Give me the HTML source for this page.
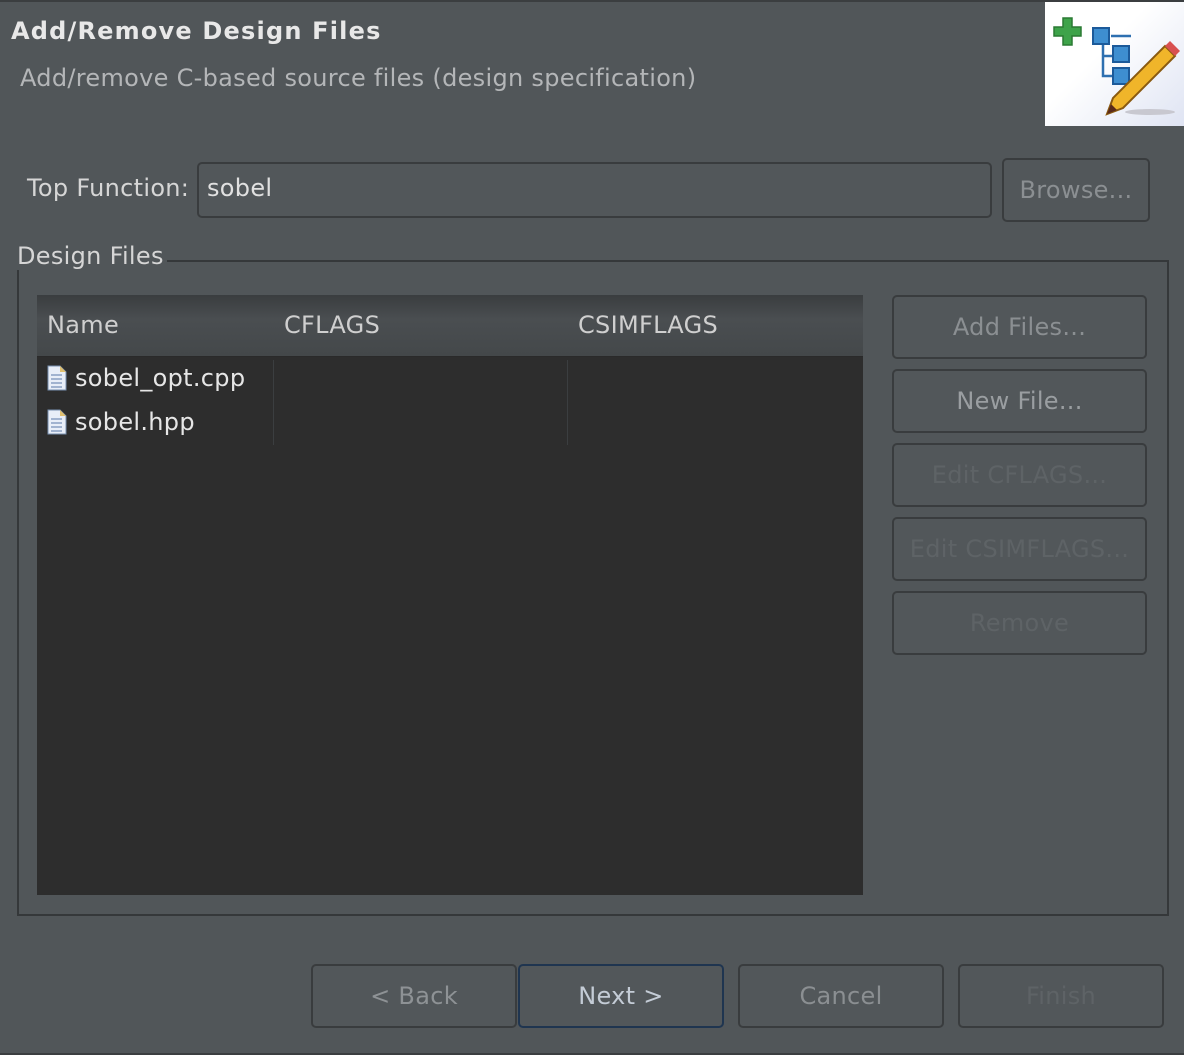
<!DOCTYPE html>
<html><head><style>
*{box-sizing:border-box;margin:0;padding:0}
body{width:1184px;height:1055px;background:#515659;font-family:"DejaVu Sans","Liberation Sans",sans-serif;color:#d6d6d6;position:relative;overflow:hidden;font-size:24px;letter-spacing:0.3px}
.a{position:absolute;white-space:nowrap}
.btn{position:absolute;border:2px solid #393c3e;border-radius:5px;background:#52575a;color:#8b8f92;text-align:center;font-size:24px}
.dis{color:#5e6366}
</style></head><body>
<div class="a" style="left:0;top:0;width:1184px;height:2px;background:#3b3e40"></div>
<div class="a" style="left:11px;top:17px;font-weight:bold;font-size:24px;letter-spacing:1.2px;color:#e8e8e8">Add/Remove Design Files</div>
<div class="a" style="left:20px;top:64px;color:#b4b6b8">Add/remove C-based source files (design specification)</div>
<div class="a" style="left:1045px;top:2px;width:139px;height:124px;background:linear-gradient(135deg,#ffffff 40%,#dfe4f3)">
<svg width="139" height="124" viewBox="0 0 139 124">
<path d="M18 16h9v9h9v9h-9v9h-9v-9h-9v-9h9z" fill="#3ea34a" stroke="#2a7a33" stroke-width="1.5"/>
<path d="M58 36v38h12M58 54h12" stroke="#2d6fb0" stroke-width="2.5" fill="none"/>
<rect x="48" y="26" width="16" height="16" fill="#3e8ed0" stroke="#1c5a9a" stroke-width="2"/>
<rect x="68" y="44" width="16" height="16" fill="#3e8ed0" stroke="#1c5a9a" stroke-width="2"/>
<rect x="68" y="66" width="16" height="16" fill="#3e8ed0" stroke="#1c5a9a" stroke-width="2"/>
<path d="M66 34h20" stroke="#2d6fb0" stroke-width="2.5"/>
<path d="M120 44l10 10-52 52-16 6 6-16z" fill="#f0b52a" stroke="#8a5a10" stroke-width="2"/>
<path d="M120 44l10 10 5-5-10-10z" fill="#d85050"/>
<path d="M62 112l4-10 6 6z" fill="#5a2a1a"/>
<ellipse cx="105" cy="110" rx="25" ry="3" fill="#c8c8d0"/>
</svg></div>
<div class="a" style="left:27px;top:174px">Top Function:</div>
<div class="a" style="left:197px;top:162px;width:795px;height:56px;border:2px solid #393c3e;border-radius:5px;background:#52575a;padding:10px 8px;color:#e0e0e0">sobel</div>
<div class="btn" style="left:1002px;top:158px;width:148px;height:64px;line-height:60px">Browse...</div>
<div class="a" style="left:17px;top:260px;width:1152px;height:656px;border:2px solid #35383a"></div>
<div class="a" style="left:14px;top:242px;background:#515659;padding:0 3px;color:#d6d6d6">Design Files</div>
<div class="a" style="left:37px;top:295px;width:826px;height:600px;background:#2d2d2d"></div>
<div class="a" style="left:37px;top:295px;width:826px;height:62px;background:linear-gradient(#3a3d3f,#4a4e51 40%,#44484a);border-bottom:1px solid #2a2a2a"></div>
<div class="a" style="left:47px;top:311px;color:#cfcfcf">Name</div>
<div class="a" style="left:284px;top:311px;color:#cfcfcf">CFLAGS</div>
<div class="a" style="left:578px;top:311px;color:#cfcfcf">CSIMFLAGS</div>
<div class="a" style="left:273px;top:360px;width:1px;height:85px;background:#3b3e40"></div>
<div class="a" style="left:567px;top:360px;width:1px;height:85px;background:#3b3e40"></div>
<svg class="a" style="left:47px;top:365px" width="20" height="26"><path d="M1 1h12l6 6v18H1z" fill="#e8eef8" stroke="#7890b0"/><path d="M13 1v6h6" fill="#e0c070"/><path d="M4 10h11M4 14h11M4 18h11M4 22h11" stroke="#5a78a8"/></svg>
<div class="a" style="left:75px;top:364px;color:#e6e6e6">sobel_opt.cpp</div>
<svg class="a" style="left:47px;top:409px" width="20" height="26"><path d="M1 1h12l6 6v18H1z" fill="#e8eef8" stroke="#7890b0"/><path d="M13 1v6h6" fill="#e0c070"/><path d="M4 10h11M4 14h11M4 18h11M4 22h11" stroke="#5a78a8"/></svg>
<div class="a" style="left:75px;top:408px;color:#e6e6e6">sobel.hpp</div>
<div class="btn" style="left:892px;top:295px;width:255px;height:64px;line-height:60px">Add Files...</div>
<div class="btn" style="left:892px;top:369px;width:255px;height:64px;line-height:60px;color:#9a9ea1">New File...</div>
<div class="btn dis" style="left:892px;top:443px;width:255px;height:64px;line-height:60px">Edit CFLAGS...</div>
<div class="btn dis" style="left:892px;top:517px;width:255px;height:64px;line-height:60px">Edit CSIMFLAGS...</div>
<div class="btn dis" style="left:892px;top:591px;width:255px;height:64px;line-height:60px">Remove</div>
<div class="btn" style="left:311px;top:964px;width:206px;height:64px;line-height:60px;color:#8e9295">&lt; Back</div>
<div class="btn" style="left:518px;top:964px;width:206px;height:64px;line-height:60px;color:#c4ccd6;border-color:#1f3550">Next &gt;</div>
<div class="btn" style="left:738px;top:964px;width:206px;height:64px;line-height:60px">Cancel</div>
<div class="btn dis" style="left:958px;top:964px;width:206px;height:64px;line-height:60px">Finish</div>
<div class="a" style="left:0;top:1053px;width:1184px;height:2px;background:#3b3e40"></div>
</body></html>
